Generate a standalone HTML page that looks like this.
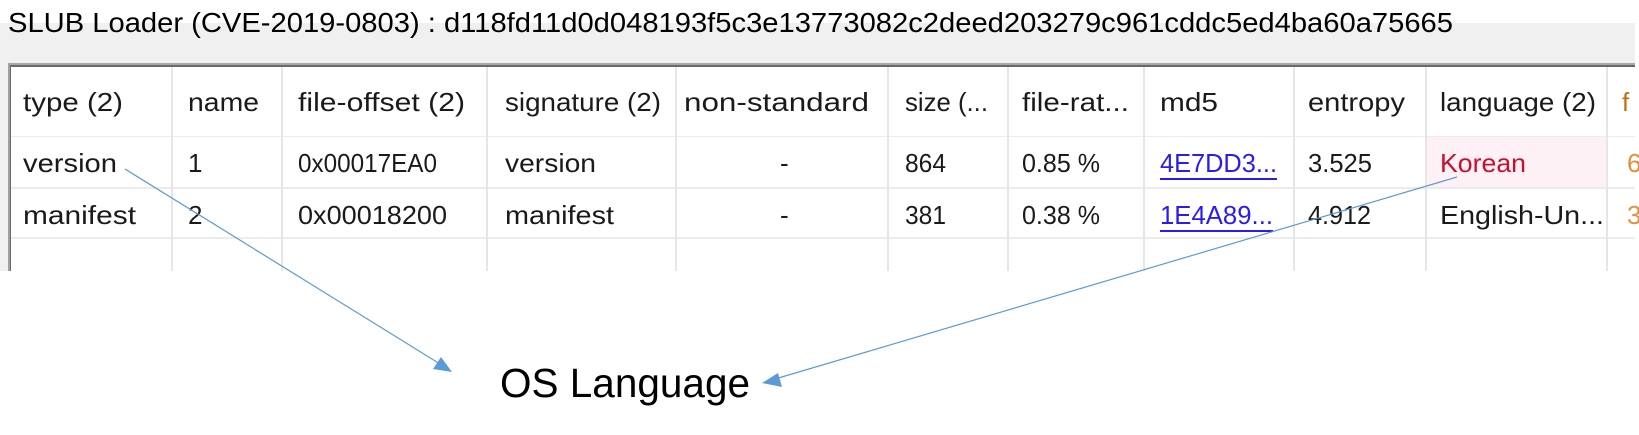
<!DOCTYPE html>
<html><head><meta charset="utf-8"><style>
html,body{margin:0;padding:0;background:#fff;width:1639px;height:435px;overflow:hidden}
svg{display:block}
text{font-family:"Liberation Sans",sans-serif}
</style></head><body>
<svg width="1639" height="435" viewBox="0 0 1639 435" xmlns="http://www.w3.org/2000/svg">
<rect x="0" y="23" width="1635" height="42" fill="#f0f0f0"/>
<rect x="0" y="23" width="9" height="248" fill="#f0f0f0"/>
<text x="8" y="32" font-size="28" fill="#000" textLength="1445" lengthAdjust="spacingAndGlyphs">SLUB Loader (CVE-2019-0803) : d118fd11d0d048193f5c3e13773082c2deed203279c961cddc5ed4ba60a75665</text>
<rect x="9" y="65" width="1626" height="206" fill="#fff"/>
<rect x="9" y="136" width="1626" height="1" fill="#ececec"/>
<rect x="1426" y="137" width="180" height="50" fill="#fdf1f6"/>
<rect x="9" y="187" width="1626" height="2" fill="#ececec"/>
<rect x="9" y="237" width="1626" height="2" fill="#ececec"/>
<g fill="#e6e6e6">
<rect x="171" y="67" width="2" height="204"/>
<rect x="281" y="67" width="2" height="204"/>
<rect x="486" y="67" width="2" height="204"/>
<rect x="675" y="67" width="2" height="204"/>
<rect x="887" y="67" width="2" height="204"/>
<rect x="1007" y="67" width="2" height="204"/>
<rect x="1143" y="67" width="2" height="204"/>
<rect x="1293" y="67" width="2" height="204"/>
<rect x="1425" y="67" width="2" height="204"/>
<rect x="1606" y="67" width="2" height="204"/>
</g>
<rect x="8" y="63" width="1627" height="2" fill="#a8a8a8"/>
<rect x="8" y="65" width="1627" height="2" fill="#6a6a6a"/>
<rect x="8" y="63" width="2" height="208" fill="#a0a0a0"/>
<rect x="10" y="65" width="1" height="206" fill="#6a6a6a"/>
<g font-size="26" fill="#1a1a1a">
<text x="23" y="111" textLength="100" lengthAdjust="spacingAndGlyphs">type (2)</text>
<text x="188" y="111" textLength="71" lengthAdjust="spacingAndGlyphs">name</text>
<text x="298" y="111" textLength="167" lengthAdjust="spacingAndGlyphs">file-offset (2)</text>
<text x="505" y="111" textLength="156" lengthAdjust="spacingAndGlyphs">signature (2)</text>
<text x="684" y="111" textLength="185" lengthAdjust="spacingAndGlyphs">non-standard</text>
<text x="905" y="111" textLength="83" lengthAdjust="spacingAndGlyphs">size (...</text>
<text x="1022" y="111" textLength="107" lengthAdjust="spacingAndGlyphs">file-rat...</text>
<text x="1160" y="111" textLength="58" lengthAdjust="spacingAndGlyphs">md5</text>
<text x="1308" y="111" textLength="97" lengthAdjust="spacingAndGlyphs">entropy</text>
<text x="1440" y="111" textLength="156" lengthAdjust="spacingAndGlyphs">language (2)</text>
<text x="1622" y="111" fill="#c07010">f</text>

<text x="23" y="172" textLength="94" lengthAdjust="spacingAndGlyphs">version</text>
<text x="188" y="172">1</text>
<text x="298" y="172" textLength="139" lengthAdjust="spacingAndGlyphs">0x00017EA0</text>
<text x="505" y="172" textLength="91" lengthAdjust="spacingAndGlyphs">version</text>
<text x="780" y="172">-</text>
<text x="905" y="172" textLength="41" lengthAdjust="spacingAndGlyphs">864</text>
<text x="1022" y="172" textLength="78" lengthAdjust="spacingAndGlyphs">0.85 %</text>
<text x="1160" y="172" textLength="117" lengthAdjust="spacingAndGlyphs" fill="#2a1cf0">4E7DD3...</text>
<text x="1308" y="172" textLength="64" lengthAdjust="spacingAndGlyphs">3.525</text>
<text x="1440" y="172" textLength="86" lengthAdjust="spacingAndGlyphs" fill="#c8102e">Korean</text>
<text x="1627" y="172" fill="#e09040">6</text>

<text x="23" y="224" textLength="113" lengthAdjust="spacingAndGlyphs">manifest</text>
<text x="188" y="224">2</text>
<text x="298" y="224" textLength="149" lengthAdjust="spacingAndGlyphs">0x00018200</text>
<text x="505" y="224" textLength="109" lengthAdjust="spacingAndGlyphs">manifest</text>
<text x="780" y="224">-</text>
<text x="905" y="224" textLength="41" lengthAdjust="spacingAndGlyphs">381</text>
<text x="1022" y="224" textLength="78" lengthAdjust="spacingAndGlyphs">0.38 %</text>
<text x="1160" y="224" textLength="113" lengthAdjust="spacingAndGlyphs" fill="#2a1cf0">1E4A89...</text>
<text x="1308" y="224" textLength="63" lengthAdjust="spacingAndGlyphs">4.912</text>
<text x="1440" y="224" textLength="164" lengthAdjust="spacingAndGlyphs">English-Un...</text>
<text x="1627" y="224" fill="#e09040">3</text>
</g>
<rect x="1160" y="178" width="117" height="2" fill="#2a1cf0"/>
<rect x="1160" y="230" width="113" height="2" fill="#2a1cf0"/>
<text x="500" y="397" font-size="41" fill="#000" textLength="250" lengthAdjust="spacingAndGlyphs">OS Language</text>
<g stroke="#5b9bd5" stroke-width="1.2" fill="#5b9bd5">
<line x1="125" y1="169" x2="440" y2="364"/>
<polygon points="452,372 433,369 441,357" stroke="none"/>
<line x1="1457" y1="177" x2="775" y2="379"/>
<polygon points="762,383 778,373 782,387" stroke="none"/>
</g>
</svg>
</body></html>
